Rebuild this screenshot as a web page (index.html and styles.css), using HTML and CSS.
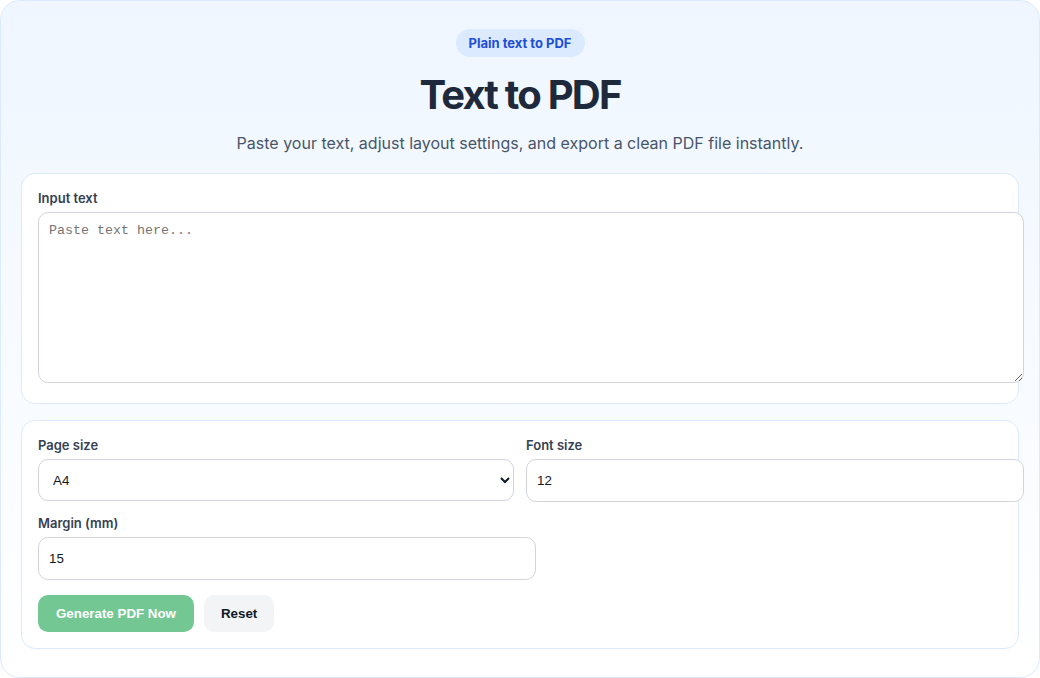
FILE: index.html
```html
<!DOCTYPE html>
<html lang="en">
<head>
<meta charset="utf-8">
<title>Text to PDF</title>
<link rel="stylesheet" href="styles.css">
</head>
<body>
<div class="app">
  <header class="hero">
    <span class="badge">Plain text to PDF</span>
    <h1 class="title">Text to PDF</h1>
    <p class="subtitle">Paste your text, adjust layout settings, and export a clean PDF file instantly.</p>
  </header>

  <section class="card">
    <label class="label" for="txt">Input text</label>
    <textarea id="txt" class="textarea" placeholder="Paste text here..."></textarea>
  </section>

  <section class="card card-settings">
    <div class="grid">
      <div class="field">
        <label class="label" for="size">Page size</label>
        <select id="size" class="select">
          <option>A4</option>
          <option>Letter</option>
          <option>Legal</option>
        </select>
      </div>
      <div class="field">
        <label class="label" for="font">Font size</label>
        <input id="font" class="input" type="text" value="12">
      </div>
      <div class="field">
        <label class="label" for="margin">Margin (mm)</label>
        <input id="margin" class="input" type="text" value="15">
      </div>
    </div>
    <div class="actions">
      <button class="btn btn-primary" disabled>Generate PDF Now</button>
      <button class="btn btn-secondary">Reset</button>
    </div>
  </section>
</div>
</body>
</html>
```

FILE: styles.css
```css
* {
  margin: 0;
}

body {
  margin: 0;
  background: #ffffff;
  font-family: Inter, "Noto Sans", sans-serif;
  color: #1f2937;
}

.app {
  border: 1px solid #dbeafe;
  border-radius: 20px;
  background: linear-gradient(180deg, #eff6ff 0%, #ffffff 100%);
  padding: 28px 20px;
  display: flex;
  flex-direction: column;
  gap: 16px;
}

.hero {
  display: flex;
  flex-direction: column;
  align-items: center;
  text-align: center;
  margin-bottom: 2px;
}

.badge {
  display: inline-block;
  background: #dbeafe;
  color: #1d4ed8;
  font-size: 13px;
  font-weight: 700;
  line-height: 16px;
  padding: 6px 13px;
  border-radius: 999px;
}

.title {
  margin-top: 14px;
  font-size: 40px;
  line-height: 48px;
  font-weight: 700;
  letter-spacing: -0.045em;
  color: #1e293b;
}

.subtitle {
  margin-top: 12px;
  font-size: 16px;
  line-height: 24px;
  color: #475569;
}

.card {
  background: #ffffff;
  border: 1px solid #dbeafe;
  border-radius: 14px;
  padding: 16px;
}

.label {
  display: block;
  font-size: 13px;
  line-height: 16px;
  font-weight: 600;
  color: #374151;
  margin-bottom: 6px;
}

.textarea {
  width: 100%;
  height: 149px;
  padding: 10px;
  border: 1px solid #d1d5db;
  border-radius: 10px;
  font-family: "Liberation Mono", monospace;
  font-size: 13.333px;
  color: #111827;
  background: #ffffff;
  resize: vertical;
}

.textarea::placeholder {
  color: #757575;
}

.grid {
  display: grid;
  grid-template-columns: 1fr 1fr;
  column-gap: 12px;
  row-gap: 13px;
}

.field {
  min-width: 0;
}

.select {
  width: 100%;
  height: 42px;
  padding: 0 8px 0 10px;
  border: 1px solid #d1d5db;
  border-radius: 10px;
  background: #ffffff;
  font-family: "Liberation Sans", Arial, sans-serif;
  font-size: 13.333px;
  color: #111827;
}

.input {
  width: 100%;
  height: 41px;
  padding: 0 10px;
  border: 1px solid #d1d5db;
  border-radius: 10px;
  background: #ffffff;
  font-family: "Liberation Sans", Arial, sans-serif;
  font-size: 13.333px;
  color: #111827;
}

.actions {
  display: flex;
  gap: 10px;
  margin-top: 15px;
}

.btn {
  border: 0;
  border-radius: 10px;
  font-family: "Liberation Sans", Arial, sans-serif;
  font-size: 13.333px;
  font-weight: 700;
  line-height: 17px;
  padding: 10px 18px;
}

.btn-primary {
  background: #16a34a;
  color: #ffffff;
  opacity: 0.6;
}

.btn-secondary {
  background: #f3f4f6;
  color: #111827;
  padding: 10px 17px;
}
```
